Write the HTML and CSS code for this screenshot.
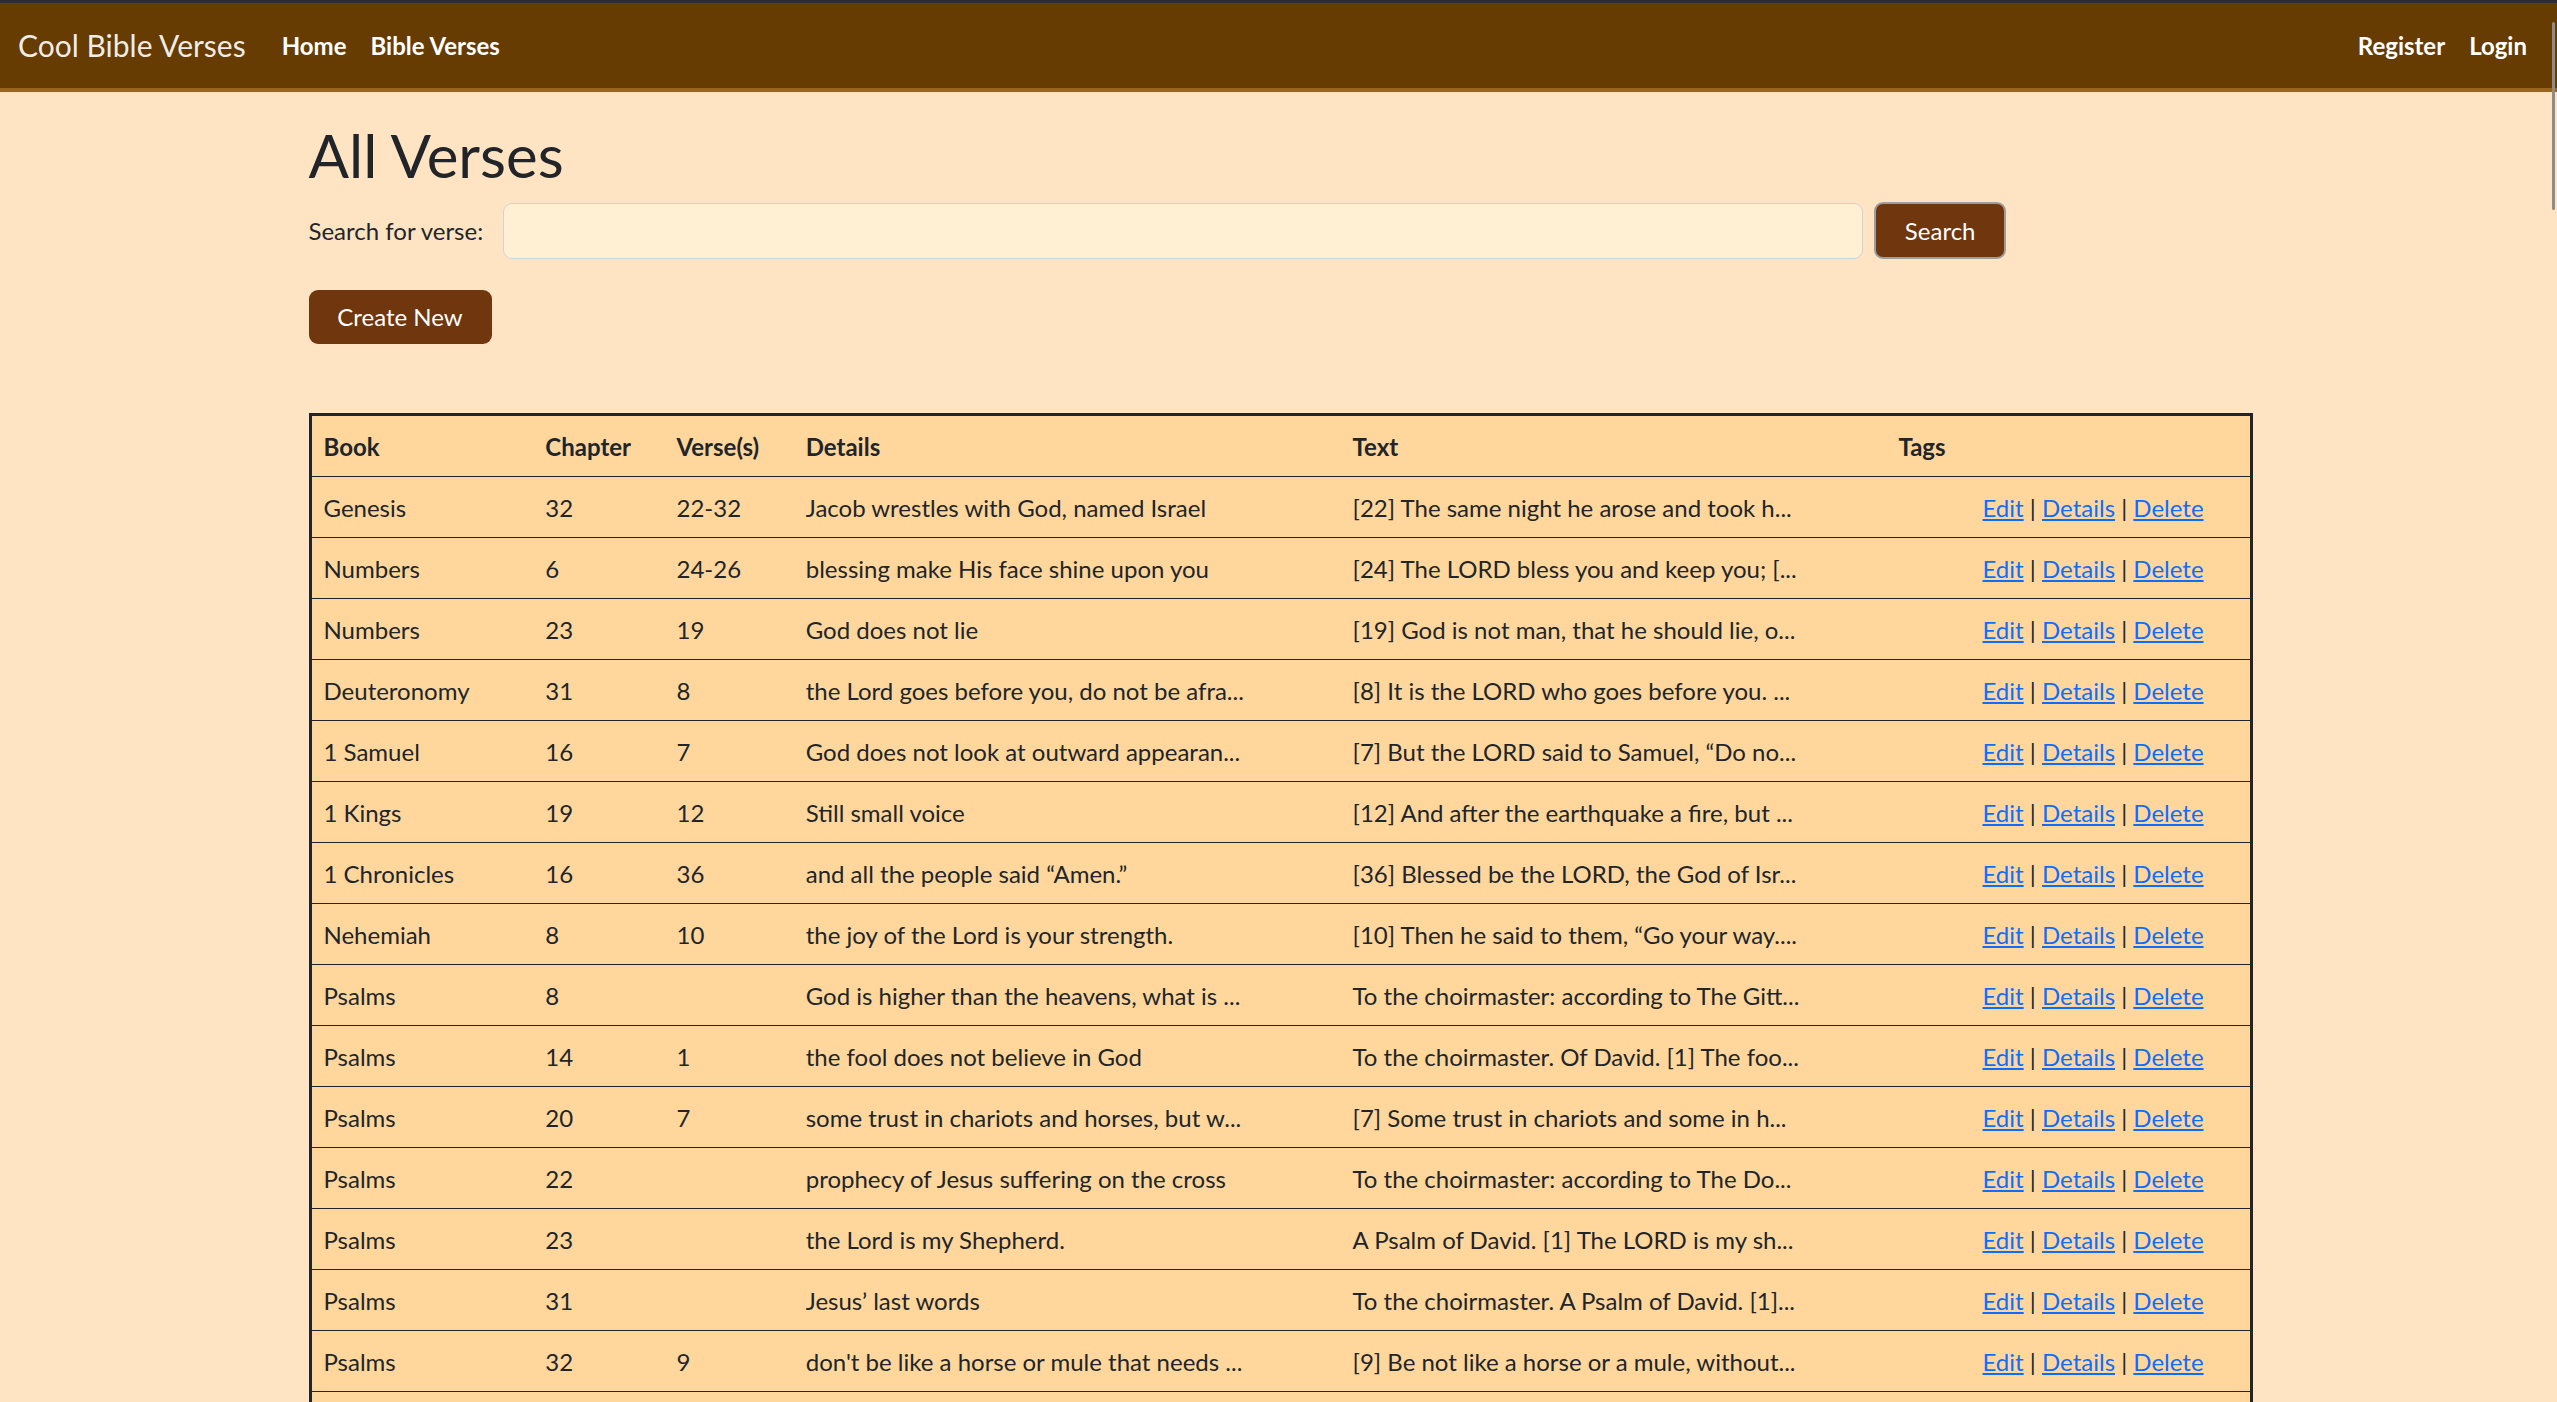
FILE: index.html
```html
<!DOCTYPE html>
<html lang="en">
<head>
<meta charset="utf-8">
<title>All Verses - Cool Bible Verses</title>
<link rel="stylesheet" href="styles.css">
</head>
<body>
<header class="navbar">
  <a class="brand" href="#">Cool Bible Verses</a>
  <nav class="nav">
    <a class="nav-link" href="#">Home</a>
    <a class="nav-link" href="#">Bible Verses</a>
  </nav>
  <nav class="nav nav-right">
    <a class="nav-link" href="#">Register</a>
    <a class="nav-link" href="#">Login</a>
  </nav>
</header>
<div class="scroll-thumb"></div>

<main class="container">
  <h1 class="title">All Verses</h1>
  <form class="search-form">
    <label class="search-label" for="q">Search for verse:</label>
    <input class="search-input" id="q" type="text">
    <button class="btn btn-search" type="button">Search</button>
  </form>
  <div class="create-row">
    <a class="btn btn-create" href="#">Create New</a>
  </div>

  <table class="verses">
    <colgroup>
      <col class="c-book"><col class="c-chapter"><col class="c-verse"><col class="c-details"><col class="c-text"><col class="c-tags"><col class="c-actions">
    </colgroup>
    <thead>
      <tr><th>Book</th><th>Chapter</th><th>Verse(s)</th><th>Details</th><th>Text</th><th>Tags</th><th></th></tr>
    </thead>
    <tbody>
      <tr><td>Genesis</td><td>32</td><td>22-32</td><td>Jacob wrestles with God, named Israel</td><td>[22] The same night he arose and took h...</td><td></td><td class="actions"><a href="#">Edit</a> | <a href="#">Details</a> | <a href="#">Delete</a></td></tr>
      <tr><td>Numbers</td><td>6</td><td>24-26</td><td>blessing make His face shine upon you</td><td>[24] The LORD bless you and keep you; [...</td><td></td><td class="actions"><a href="#">Edit</a> | <a href="#">Details</a> | <a href="#">Delete</a></td></tr>
      <tr><td>Numbers</td><td>23</td><td>19</td><td>God does not lie</td><td>[19] God is not man, that he should lie, o...</td><td></td><td class="actions"><a href="#">Edit</a> | <a href="#">Details</a> | <a href="#">Delete</a></td></tr>
      <tr><td>Deuteronomy</td><td>31</td><td>8</td><td>the Lord goes before you, do not be afra...</td><td>[8] It is the LORD who goes before you. ...</td><td></td><td class="actions"><a href="#">Edit</a> | <a href="#">Details</a> | <a href="#">Delete</a></td></tr>
      <tr><td>1 Samuel</td><td>16</td><td>7</td><td>God does not look at outward appearan...</td><td>[7] But the LORD said to Samuel, “Do no...</td><td></td><td class="actions"><a href="#">Edit</a> | <a href="#">Details</a> | <a href="#">Delete</a></td></tr>
      <tr><td>1 Kings</td><td>19</td><td>12</td><td>Still small voice</td><td>[12] And after the earthquake a fire, but ...</td><td></td><td class="actions"><a href="#">Edit</a> | <a href="#">Details</a> | <a href="#">Delete</a></td></tr>
      <tr><td>1 Chronicles</td><td>16</td><td>36</td><td>and all the people said “Amen.”</td><td>[36] Blessed be the LORD, the God of Isr...</td><td></td><td class="actions"><a href="#">Edit</a> | <a href="#">Details</a> | <a href="#">Delete</a></td></tr>
      <tr><td>Nehemiah</td><td>8</td><td>10</td><td>the joy of the Lord is your strength.</td><td>[10] Then he said to them, “Go your way....</td><td></td><td class="actions"><a href="#">Edit</a> | <a href="#">Details</a> | <a href="#">Delete</a></td></tr>
      <tr><td>Psalms</td><td>8</td><td></td><td>God is higher than the heavens, what is ...</td><td>To the choirmaster: according to The Gitt...</td><td></td><td class="actions"><a href="#">Edit</a> | <a href="#">Details</a> | <a href="#">Delete</a></td></tr>
      <tr><td>Psalms</td><td>14</td><td>1</td><td>the fool does not believe in God</td><td>To the choirmaster. Of David. [1] The foo...</td><td></td><td class="actions"><a href="#">Edit</a> | <a href="#">Details</a> | <a href="#">Delete</a></td></tr>
      <tr><td>Psalms</td><td>20</td><td>7</td><td>some trust in chariots and horses, but w...</td><td>[7] Some trust in chariots and some in h...</td><td></td><td class="actions"><a href="#">Edit</a> | <a href="#">Details</a> | <a href="#">Delete</a></td></tr>
      <tr><td>Psalms</td><td>22</td><td></td><td>prophecy of Jesus suffering on the cross</td><td>To the choirmaster: according to The Do...</td><td></td><td class="actions"><a href="#">Edit</a> | <a href="#">Details</a> | <a href="#">Delete</a></td></tr>
      <tr><td>Psalms</td><td>23</td><td></td><td>the Lord is my Shepherd.</td><td>A Psalm of David. [1] The LORD is my sh...</td><td></td><td class="actions"><a href="#">Edit</a> | <a href="#">Details</a> | <a href="#">Delete</a></td></tr>
      <tr><td>Psalms</td><td>31</td><td></td><td>Jesus’ last words</td><td>To the choirmaster. A Psalm of David. [1]...</td><td></td><td class="actions"><a href="#">Edit</a> | <a href="#">Details</a> | <a href="#">Delete</a></td></tr>
      <tr><td>Psalms</td><td>32</td><td>9</td><td>don't be like a horse or mule that needs ...</td><td>[9] Be not like a horse or a mule, without...</td><td></td><td class="actions"><a href="#">Edit</a> | <a href="#">Details</a> | <a href="#">Delete</a></td></tr>
      <tr><td>Psalms</td><td>46</td><td>10</td><td>be still and know that I am God</td><td>[10] “Be still, and know that I am God. ...</td><td></td><td class="actions"><a href="#">Edit</a> | <a href="#">Details</a> | <a href="#">Delete</a></td></tr>
    </tbody>
  </table>
</main>
</body>
</html>
```

FILE: styles.css
```css
html {
  scrollbar-width: none;
}
html::-webkit-scrollbar,
body::-webkit-scrollbar {
  display: none;
}
* {
  box-sizing: border-box;
}
body {
  margin: 0;
  background: #ffe4c4;
  color: #212529;
  font-family: "Lato", "Liberation Sans", sans-serif;
  font-size: 24px;
  line-height: 1.5;
}

/* navbar */
.navbar {
  display: flex;
  align-items: center;
  height: 92px;
  padding: 0 18px;
  background: #663c03;
  border-top: 3px solid #2d2d32;
  border-bottom: 4px solid #9b6320;
}
.brand {
  color: rgba(255, 255, 255, 0.92);
  font-size: 30px;
  text-decoration: none;
  margin-right: 24px;
  white-space: nowrap;
}
.nav {
  display: flex;
}
.nav-right {
  margin-left: auto;
}
.nav-link {
  color: #fff;
  font-weight: 700;
  text-decoration: none;
  padding: 0 12px;
}
.scroll-thumb {
  position: fixed;
  top: 22px;
  right: 2px;
  width: 3px;
  height: 188px;
  background: #8c8c8c;
  border-radius: 2px;
}

/* main */
.container {
  max-width: 1976px;
  margin: 0 auto;
  padding: 27px 18px 40px;
}
.title {
  margin: 0 0 11px;
  font-size: 60px;
  font-weight: 400;
  line-height: 1.2;
}
.search-form {
  display: flex;
  align-items: center;
  height: 57px;
}
.search-label {
  margin-right: 20px;
}
.search-input {
  flex: 0 0 1360px;
  height: 56px;
  background: #fff0d3;
  border: 1px solid #cfd4da;
  border-radius: 9px;
  font: inherit;
  padding: 0 18px;
  margin-right: 11px;
}
.btn {
  display: inline-flex;
  align-items: center;
  justify-content: center;
  background: #70360d;
  color: #fff;
  font: inherit;
  border-radius: 9px;
  text-decoration: none;
  cursor: pointer;
}
.btn-search {
  height: 57px;
  width: 132px;
  padding: 0;
  border: 2px solid #9d9d9d;
}
.create-row {
  margin-top: 31px;
  margin-bottom: 69px;
  height: 54px;
}
.btn-create {
  height: 54px;
  width: 183px;
  border: 0;
}

/* table */
.verses {
  width: 1944px;
  table-layout: fixed;
  border-collapse: collapse;
  background: #ffd79d;
  border: 3px solid #212529;
}
.c-book { width: 223px; }
.c-chapter { width: 131px; }
.c-verse { width: 129px; }
.c-details { width: 546px; }
.c-text { width: 545px; }
.c-tags { width: 84px; }
.c-actions { width: 280px; }
.verses th,
.verses td {
  padding: 13px 12px 11px;
  height: 61px;
  text-align: left;
  vertical-align: top;
  white-space: nowrap;
  overflow: hidden;
  border-bottom: 1px solid #212529;
}
.verses th {
  font-weight: 700;
}
.actions a {
  color: #0d6efd;
  text-decoration: underline;
}
```
